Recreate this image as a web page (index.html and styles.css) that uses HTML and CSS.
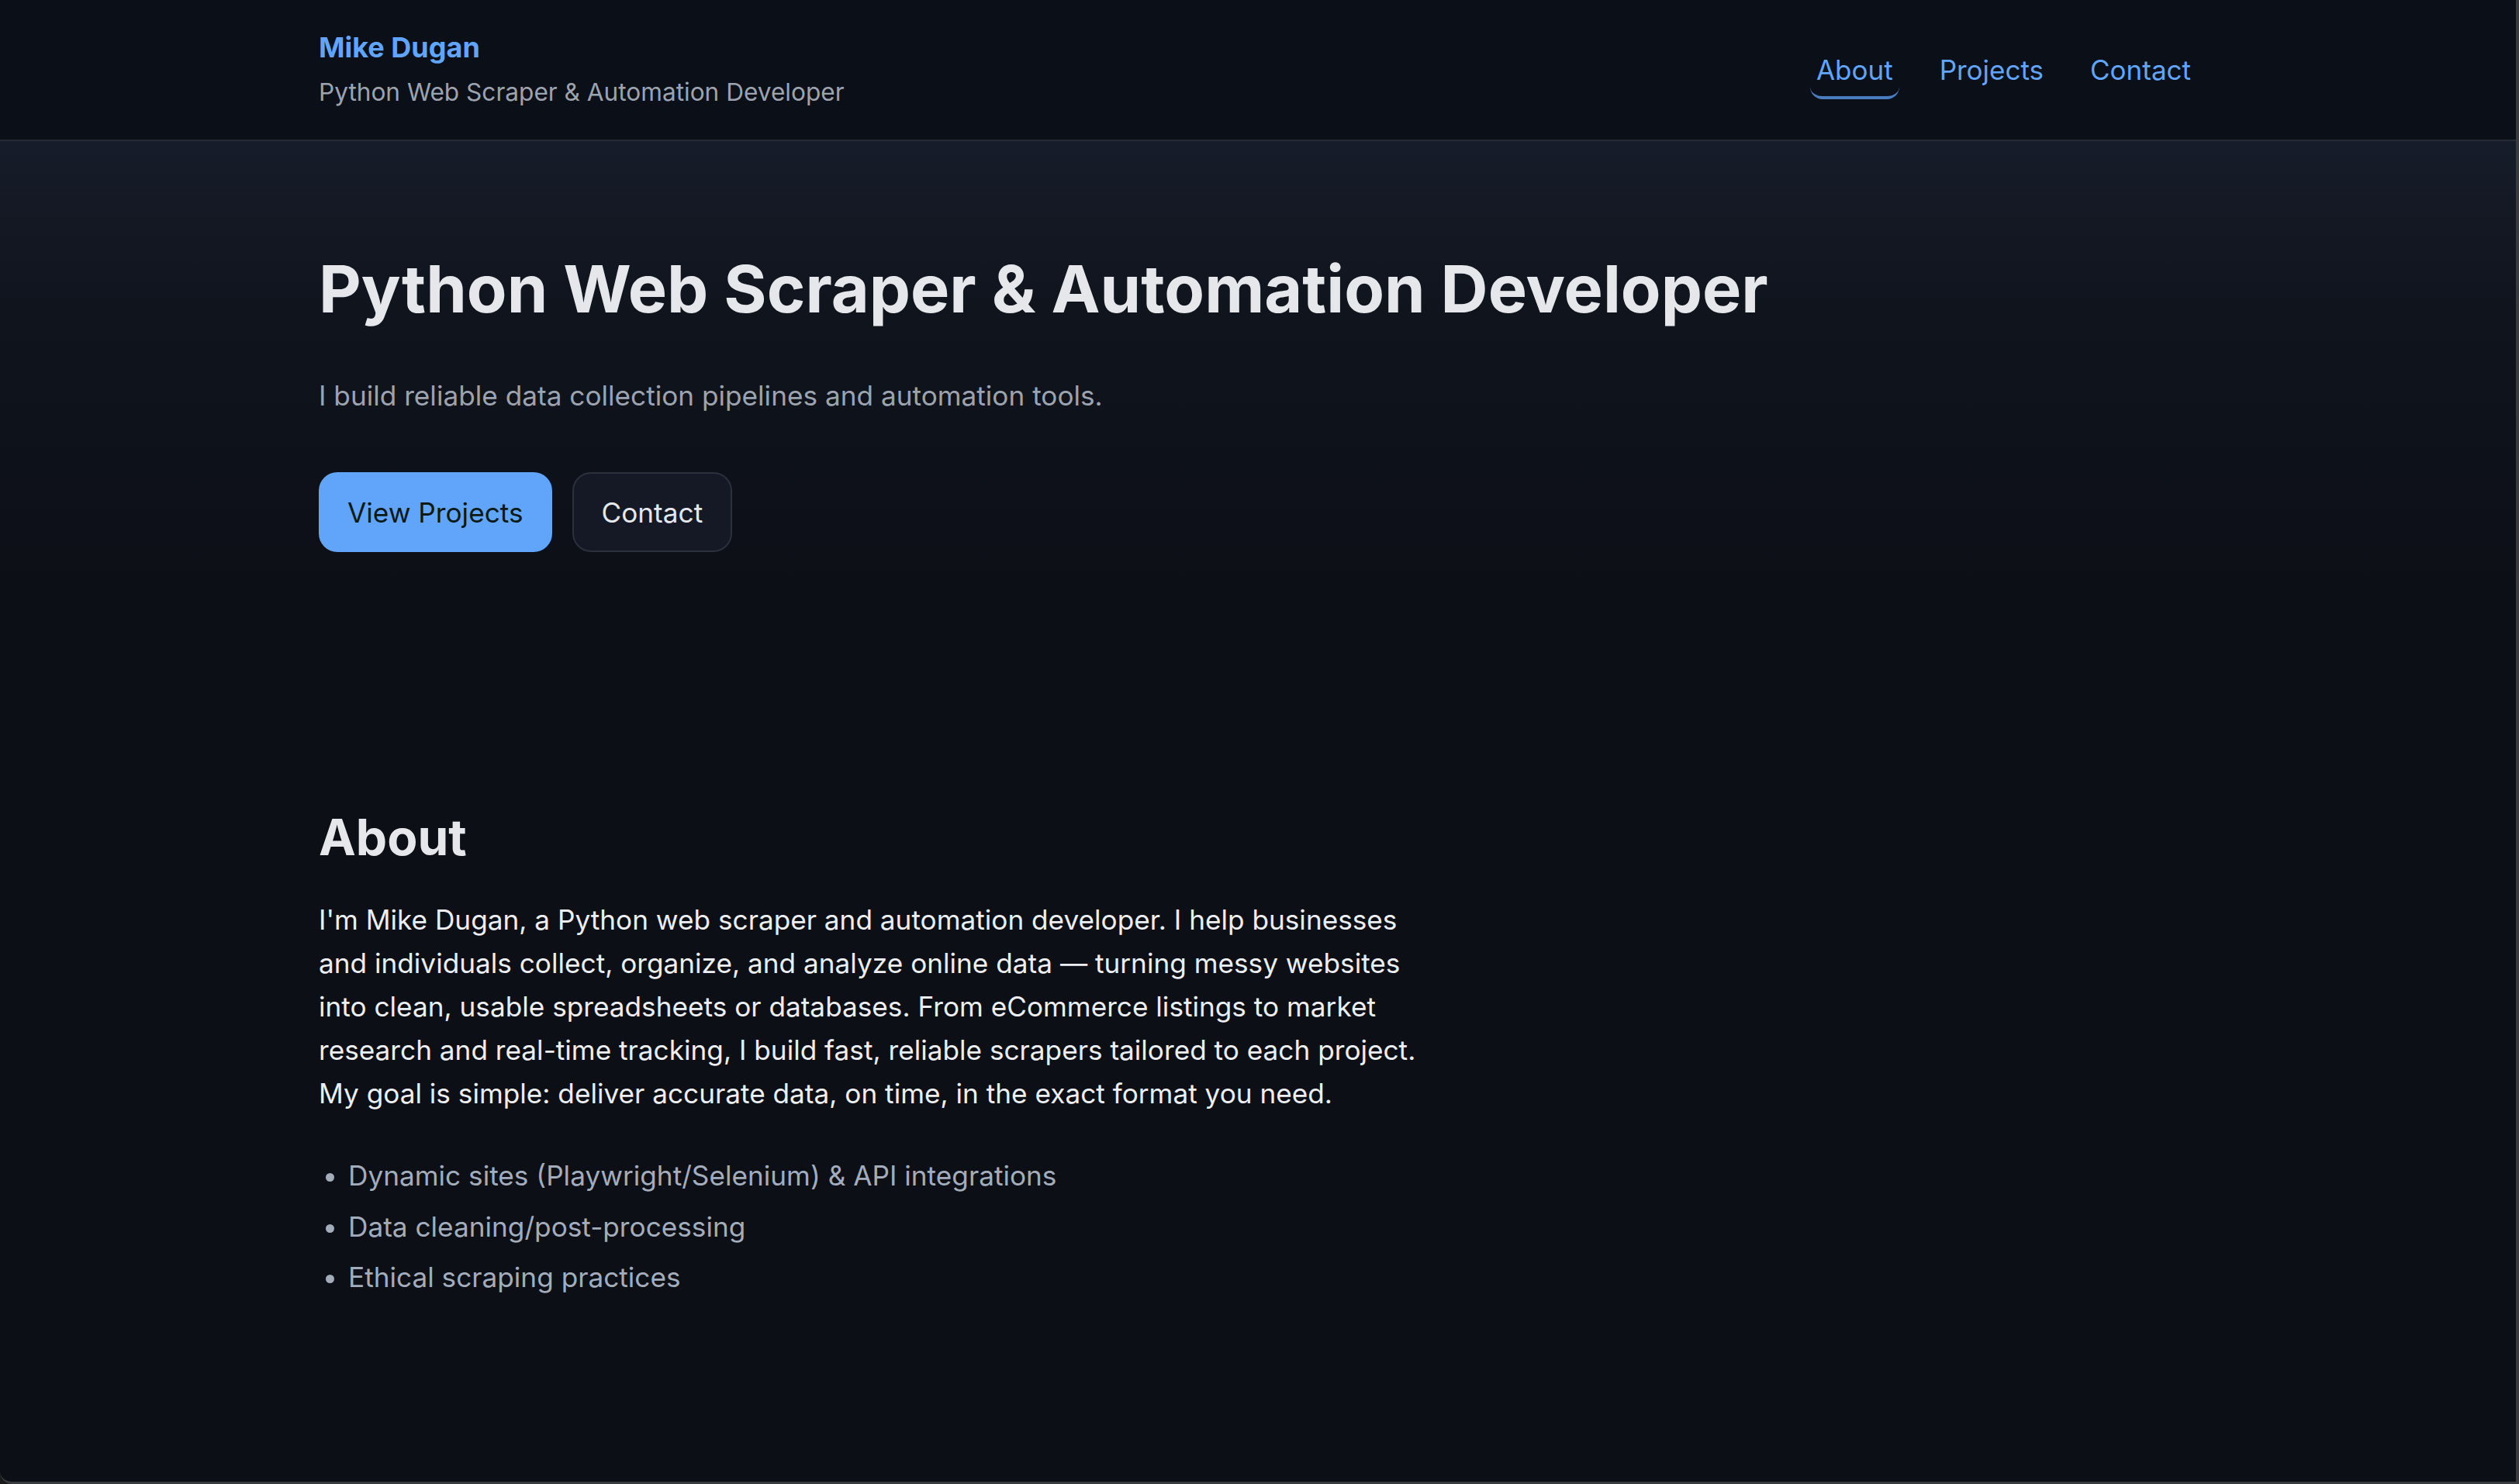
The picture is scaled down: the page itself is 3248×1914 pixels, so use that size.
FILE: index.html
```html
<!DOCTYPE html>
<html lang="en">
<head>
<meta charset="utf-8">
<title>Mike Dugan — Python Web Scraper &amp; Automation Developer</title>
<link rel="stylesheet" href="styles.css">
</head>
<body>
<div class="window">
  <header class="site-header">
    <div class="container header-inner">
      <div class="brand">
        <a class="brand-name" href="#">Mike Dugan</a>
        <div class="brand-tagline">Python Web Scraper &amp; Automation Developer</div>
      </div>
      <nav class="nav">
        <a class="nav-link active" href="#about">About</a>
        <a class="nav-link" href="#projects">Projects</a>
        <a class="nav-link" href="#contact">Contact</a>
      </nav>
    </div>
  </header>
  <main>
    <section class="hero">
      <div class="container">
        <h1 class="hero-title">Python Web Scraper &amp; Automation Developer</h1>
        <p class="hero-lead">I build reliable data collection pipelines and automation tools.</p>
        <div class="hero-actions">
          <a class="btn btn-primary" href="#projects">View Projects</a>
          <a class="btn btn-secondary" href="#contact">Contact</a>
        </div>
      </div>
    </section>
    <section class="about" id="about">
      <div class="container">
        <h2 class="section-title">About</h2>
        <p class="about-text">I'm Mike Dugan, a Python web scraper and automation developer. I help businesses and individuals collect, organize, and analyze online data — turning messy websites into clean, usable spreadsheets or databases. From eCommerce listings to market research and real-time tracking, I build fast, reliable scrapers tailored to each project. My goal is simple: deliver accurate data, on time, in the exact format you need.</p>
        <ul class="skills">
          <li>Dynamic sites (Playwright/Selenium) &amp; API integrations</li>
          <li>Data cleaning/post-processing</li>
          <li>Ethical scraping practices</li>
        </ul>
      </div>
    </section>
  </main>
</div>
</body>
</html>
```
FILE: styles.css
```css
* { box-sizing: border-box; }
html, body { margin: 0; padding: 0; }
body {
  background: #1a1a1a;
  font-family: Inter, "Noto Sans", "Liberation Sans", sans-serif;
  color: #e5e7eb;
}
.window {
  width: 3248px;
  height: 1914px;
  background: #0c0f16;
  border-right: 4px solid #3a3b3e;
  border-bottom: 3px solid #3a3b3e;
  border-bottom-left-radius: 16px;
  overflow: hidden;
}
a { text-decoration: none; }
.container {
  width: 2422px;
  margin: 0 auto;
}
.site-header {
  background: #0b0f17;
  border-bottom: 2px solid #262b36;
}
.header-inner {
  height: 180px;
  display: flex;
  align-items: center;
  justify-content: space-between;
}
.brand { display: flex; flex-direction: column; gap: 16px; margin-top: -2px; }
.brand-name {
  color: #60a5fa;
  font-weight: 700;
  font-size: 36px;
  line-height: 44px;
}
.brand-tagline {
  color: #9ca3af;
  font-size: 31.6px;
  line-height: 40px;
}
.nav { display: flex; gap: 44px; padding-top: 4px; }
.nav-link {
  color: #60a5fa;
  font-size: 35px;
  line-height: 44px;
  padding: 12px 8px;
  border-bottom: 4px solid transparent;
  border-radius: 16px;
}
.nav-link.active { border-bottom-color: #4a7cc2; }
.hero {
  background: linear-gradient(180deg, #161c29 0px, #10141d 220px, #0c0f16 580px);
  padding-top: 142px;
  padding-bottom: 332px;
}
.hero-title {
  margin: 0;
  font-size: 84.5px;
  line-height: 96px;
  font-weight: 700;
  color: #e5e7eb;
}
.hero-lead {
  margin: 66px 0 0;
  font-size: 35.2px;
  line-height: 48px;
  color: #9ca3af;
}
.hero-actions {
  margin-top: 75px;
  display: flex;
  gap: 26px;
}
.btn {
  height: 103px;
  display: inline-flex;
  align-items: center;
  padding: 0 36px;
  border-radius: 24px;
  font-size: 35.2px;
}
.btn-primary { background: #60a5fa; color: #0b1a16; padding: 0 37px; }
.btn-secondary {
  background: #141925;
  color: #e5e7eb;
  border: 2px solid #2a303c;
}
.section-title {
  margin: 0;
  font-size: 64px;
  line-height: 72px;
  font-weight: 700;
  color: #e5e7eb;
}
.about-text {
  margin: 42px 0 0;
  max-width: 1440px;
  font-size: 35.2px;
  line-height: 56px;
  color: #eceef2;
}
.skills {
  margin: 50px 0 0;
  padding-left: 38px;
  font-size: 35.2px;
  line-height: 56px;
  color: #a3acba;
}
.skills li { margin-bottom: 9.5px; }
```
